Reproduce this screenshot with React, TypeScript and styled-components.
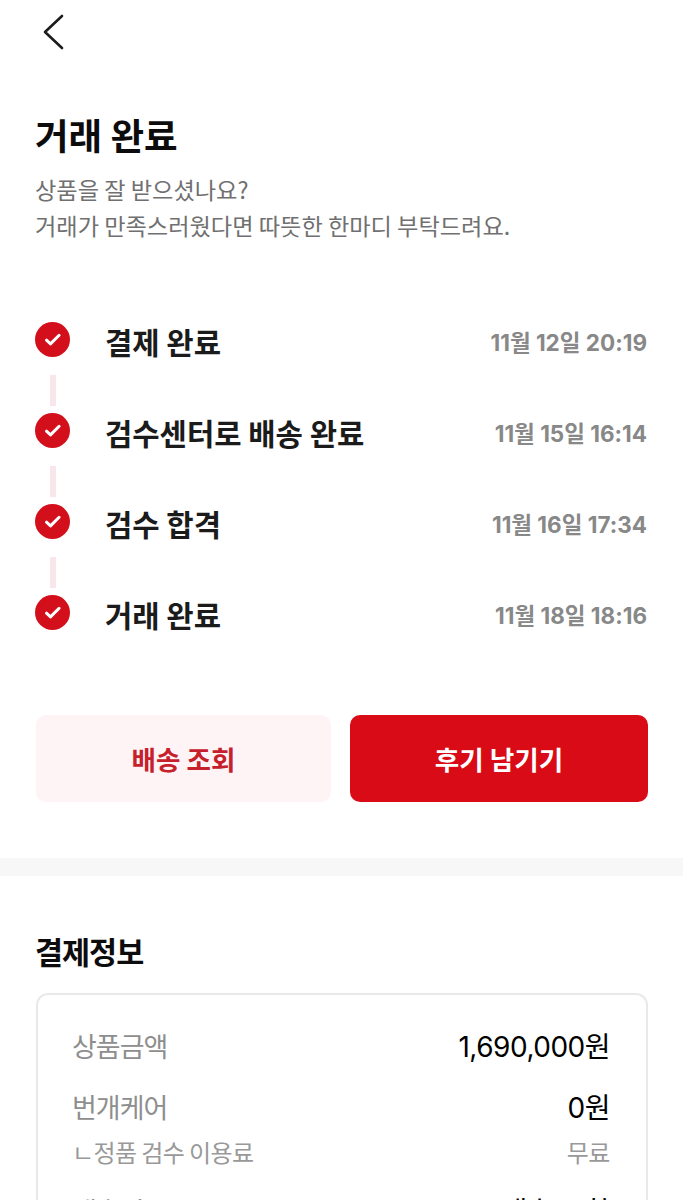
import React from 'react'
import styled, { createGlobalStyle } from 'styled-components'

const font = `"Noto Sans CJK KR", "Noto Sans", sans-serif`
const numFont = `Inter, "Noto Sans CJK KR", sans-serif`

const GlobalStyle = createGlobalStyle`
  html, body {
    margin: 0;
    padding: 0;
    background: #fff;
  }
  body {
    font-family: ${font};
  }
`

const Page = styled.div`
  width: 683px;
  height: 1200px;
  overflow: hidden;
  background: #fff;
`

const TopBar = styled.div`
  height: 64px;
  display: flex;
  align-items: center;
  padding-left: 42px;
`

const BackBtn = styled.div`
  width: 22px;
  height: 36px;
  color: #1c1c1c;
`

const Header = styled.div`
  padding: 45px 35px 0;
`

const Title = styled.h1`
  margin: 0;
  font-size: 36.5px;
  line-height: 52px;
  font-weight: 700;
  color: #0c0c0c;
`

const Sub = styled.p`
  margin: 10px 0 0;
  font-size: 23.2px;
  line-height: 36px;
  font-weight: 400;
  color: #707070;
`

const Steps = styled.div`
  padding: 80px 36px 0 35px;
  display: flex;
  flex-direction: column;
`

const StepRow = styled.div`
  height: 36px;
  display: flex;
  align-items: center;
`

const Check = styled.div`
  width: 35px;
  height: 35px;
  flex: none;
  margin-bottom: 4px;
`

const StepName = styled.div`
  margin-left: 35px;
  font-size: 29.7px;
  font-weight: 700;
  color: #1b1b1b;
  flex: 1;
`

const StepTime = styled.div`
  font-family: ${numFont};
  font-size: 22.5px;
  font-weight: 700;
  color: #888;
`

const Connector = styled.div`
  width: 6px;
  height: 31px;
  margin: 16px 0 8px 15px;
  background: #f9e6ea;
`

const Actions = styled.div`
  margin-top: 83px;
  padding: 0 35px 0 36px;
  display: flex;
  gap: 19px;
`

const Action = styled.div<{ $primary?: boolean }>`
  flex: ${(p) => (p.$primary ? '1' : '0 0 295px')};
  height: 87px;
  border-radius: 10px;
  display: grid;
  place-items: center;
  font-size: 26.6px;
  font-weight: 700;
  background: ${(p) => (p.$primary ? '#d90b17' : '#fff4f5')};
  color: ${(p) => (p.$primary ? '#fff' : '#c5202c')};
`

const Divider = styled.div`
  height: 18px;
  margin-top: 56px;
  background: #f7f7f7;
`

const Section = styled.div`
  padding: 53px 35px 0 36px;
`

const SectionTitle = styled.h2`
  margin: 0 0 0 -1px;
  font-size: 30.5px;
  line-height: 44px;
  font-weight: 700;
  letter-spacing: -1px;
  color: #0c0c0c;
`

const Card = styled.div`
  margin-top: 20px;
  border: 2px solid #e9e9e9;
  border-radius: 12px;
  padding: 30px 36px 0 34px;
  height: 300px;
`

const Row = styled.div<{ $gap?: number }>`
  display: flex;
  justify-content: space-between;
  align-items: center;
  height: 40px;
  margin-bottom: ${(p) => p.$gap ?? 21}px;
`

const Label = styled.div`
  font-size: 27px;
  letter-spacing: -1px;
  color: #8e8e8e;
`

const Value = styled.div`
  font-family: ${numFont};
  font-size: 28px;
  letter-spacing: -0.5px;
  color: #000;
`

const SubLabel = styled.div`
  font-size: 24px;
  letter-spacing: -0.6px;
  color: #999;
`

const SubValue = styled.div`
  font-size: 24px;
  letter-spacing: -0.4px;
  color: #999;
`

function CheckIcon() {
  return (
    <Check>
      <svg width="35" height="35" viewBox="0 0 35 35">
        <circle cx="17.5" cy="17.5" r="17.5" fill="#d40f1c" />
        <path d="M11.5 18.2l4 3.7 8.6-8.6" fill="none" stroke="#fff" strokeWidth="3" strokeLinecap="round" strokeLinejoin="round" />
      </svg>
    </Check>
  )
}

const steps = [
  { name: '결제 완료', time: '11월 12일 20:19' },
  { name: '검수센터로 배송 완료', time: '11월 15일 16:14' },
  { name: '검수 합격', time: '11월 16일 17:34' },
  { name: '거래 완료', time: '11월 18일 18:16' },
]

export default function App() {
  return (
    <Page>
      <GlobalStyle />
      <TopBar>
        <BackBtn>
          <svg width="22" height="36" viewBox="0 0 22 36">
            <path d="M20 2L3 18l17 16" fill="none" stroke="currentColor" strokeWidth="2.6" strokeLinecap="round" strokeLinejoin="round" />
          </svg>
        </BackBtn>
      </TopBar>
      <Header>
        <Title>거래 완료</Title>
        <Sub>
          상품을 잘 받으셨나요?
          <br />
          거래가 만족스러웠다면 따뜻한 한마디 부탁드려요.
        </Sub>
      </Header>
      <Steps>
        {steps.map((s, i) => (
          <React.Fragment key={s.name}>
            <StepRow>
              <CheckIcon />
              <StepName>{s.name}</StepName>
              <StepTime>{s.time}</StepTime>
            </StepRow>
            {i < steps.length - 1 && <Connector />}
          </React.Fragment>
        ))}
      </Steps>
      <Actions>
        <Action>배송 조회</Action>
        <Action $primary>후기 남기기</Action>
      </Actions>
      <Divider />
      <Section>
        <SectionTitle>결제정보</SectionTitle>
        <Card>
          <Row>
            <Label>상품금액</Label>
            <Value>1,690,000원</Value>
          </Row>
          <Row $gap={5}>
            <Label>번개케어</Label>
            <Value>0원</Value>
          </Row>
          <Row $gap={19}>
            <SubLabel>ㄴ정품 검수 이용료</SubLabel>
            <SubValue>무료</SubValue>
          </Row>
          <Row>
            <Label>배송비</Label>
            <Value>배송 포함</Value>
          </Row>
        </Card>
      </Section>
    </Page>
  )
}
